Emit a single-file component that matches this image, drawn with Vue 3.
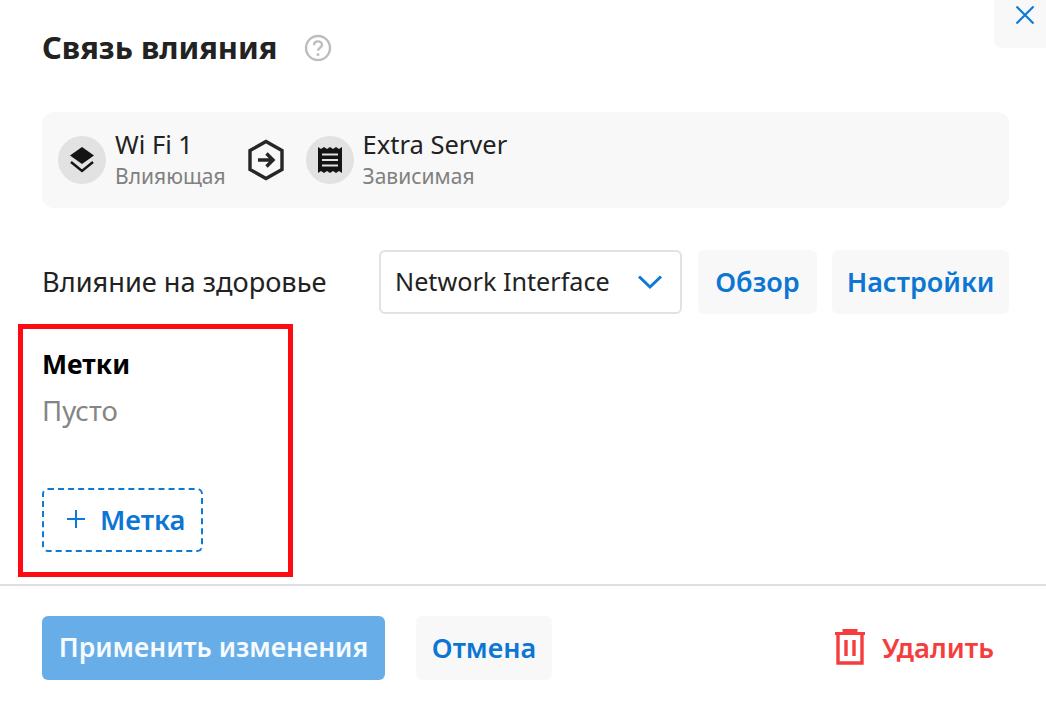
<template>
  <div class="dialog">
    <button class="close-btn" aria-label="Закрыть">
      <svg width="20" height="20" viewBox="0 0 20 20"><path d="M1.500 1.500 L18.500 18.500 M18.500 1.500 L1.500 18.500" stroke="#0b7ad9" stroke-width="2.200" fill="none" /></svg>
    </button>

    <header class="title-row">
      <h1 class="title">Связь влияния</h1>
      <svg class="help" width="28" height="28" viewBox="0 0 28 28">
        <circle cx="14" cy="14" r="12" fill="none" stroke="#bdbdbd" stroke-width="2.400" />
        <path d="M10 11.200c0-2.400 1.800-3.800 4-3.800s4 1.400 4 3.400c0 3-4 3-4 6" fill="none" stroke="#bdbdbd" stroke-width="2.400" />
        <circle cx="14" cy="20.400" r="1.500" fill="#bdbdbd" />
      </svg>
    </header>

    <div class="link-card">
      <div class="node">
        <span class="node-icon">
          <svg width="26" height="28" viewBox="0 0 26 28">
            <path d="M13 1 L25 9.500 L13 18 L1 9.500 Z" fill="#141414" />
            <path d="M2 16 L13 25 L24 16" fill="none" stroke="#141414" stroke-width="2.400" />
          </svg>
        </span>
        <div class="node-text">
          <div class="node-name">Wi Fi 1</div>
          <div class="node-role">Влияющая</div>
        </div>
      </div>

      <svg class="arrow" width="38" height="42" viewBox="0 0 38 42">
        <path d="M19 2.500 L35 11.500 V30.500 L19 39.500 L3 30.500 V11.500 Z" fill="none" stroke="#262626" stroke-width="3.400" stroke-linejoin="miter" />
        <path d="M11 21 H25 M19.500 14.500 L26 21 L19.500 27.500" fill="none" stroke="#262626" stroke-width="3.400" />
      </svg>

      <div class="node">
        <span class="node-icon">
          <svg width="26" height="28" viewBox="0 0 26 28">
            <path d="M1 1 L4 3 L7 1 L10 3 L13 1 L16 3 L19 1 L22 3 L25 1 V27 L22 25 L19 27 L16 25 L13 27 L10 25 L7 27 L4 25 L1 27 Z" fill="#141414" />
            <path d="M5 8.500 H21 M5 14 H21 M5 19.500 H21" stroke="#e2e2e2" stroke-width="2.200" />
          </svg>
        </span>
        <div class="node-text">
          <div class="node-name">Extra Server</div>
          <div class="node-role">Зависимая</div>
        </div>
      </div>
    </div>

    <div class="health-row">
      <span class="health-label">Влияние на здоровье</span>
      <div class="select">
        <span class="select-value">Network Interface</span>
        <svg width="26" height="16" viewBox="0 0 26 16"><path d="M2 2.500 L13 13 L24 2.500" fill="none" stroke="#0b7ad9" stroke-width="3" /></svg>
      </div>
      <button class="btn btn-light btn-overview">Обзор</button>
      <button class="btn btn-light btn-settings">Настройки</button>
    </div>

    <section class="tags">
      <h2 class="tags-title">Метки</h2>
      <p class="tags-empty">Пусто</p>
      <button class="add-tag">
        <svg width="20" height="20" viewBox="0 0 20 20"><path d="M10 1 V19 M1 10 H19" stroke="#0b7ad9" stroke-width="2" /></svg>
        <span>Метка</span>
      </button>
    </section>

    <footer class="footer">
      <button class="btn btn-apply">Применить изменения</button>
      <button class="btn btn-light btn-cancel">Отмена</button>
      <button class="btn-delete">
        <svg width="32" height="36" viewBox="0 0 32 36">
          <path d="M1 4.500 H31" stroke="#f53d3d" stroke-width="3" />
          <path d="M10 4 V1.500 H22 V4" fill="none" stroke="#f53d3d" stroke-width="3" />
          <path d="M4 5 V34 H28 V5" fill="none" stroke="#f53d3d" stroke-width="3.400" />
          <path d="M12 11 V27 M20 11 V27" stroke="#f53d3d" stroke-width="3.400" />
        </svg>
        <span>Удалить</span>
      </button>
    </footer>
  </div>
</template>

<script setup>
</script>

<style>
html,
body {
  margin: 0;
  background: #fff;
}
</style>

<style scoped>
.dialog {
  position: relative;
  width: 1046px;
  height: 704px;
  overflow: hidden;
  box-sizing: border-box;
  padding: 0 37px 0 42px;
  font-family: "Noto Sans", "Open Sans", sans-serif;
  color: #222;
  background: #fff;
}

button {
  font-family: inherit;
  border: 0;
  padding: 0;
  cursor: pointer;
}

.close-btn {
  position: absolute;
  top: -10px;
  right: 0;
  width: 52px;
  height: 58px;
  display: flex;
  align-items: flex-start;
  justify-content: center;
  padding: 15px 0 0 10px;
  background: #f8f8f8;
  border-radius: 0 0 0 8px;
  box-sizing: border-box;
}

.title-row {
  height: 112px;
  display: flex;
  align-items: flex-start;
  gap: 27px;
  padding-top: 26px;
  box-sizing: border-box;
}

.title {
  margin: 0;
  font-size: 30.800px;
  line-height: 42px;
  font-weight: 700;
  color: #222;
}

.help {
  margin-top: 8px;
}

.link-card {
  height: 96px;
  display: flex;
  align-items: center;
  padding: 0 16px;
  background: #f8f8f8;
  border-radius: 12px;
}

.node {
  display: flex;
  align-items: center;
  gap: 9px;
}

.node-icon {
  width: 48px;
  height: 48px;
  border-radius: 50%;
  background: #e2e2e2;
  display: flex;
  align-items: center;
  justify-content: center;
}

.node-name {
  font-size: 25.500px;
  line-height: 30px;
  margin-bottom: 2px;
  color: #222;
  white-space: nowrap;
}

.node-role {
  font-size: 21px;
  line-height: 30px;
  color: #808080;
  white-space: nowrap;
}

.arrow {
  margin: 0 21px;
}

.health-row {
  display: flex;
  align-items: center;
  height: 64px;
  margin-top: 42px;
}

.health-label {
  width: 337px;
  margin-bottom: 2px;
  font-size: 27.200px;
  color: #222;
  white-space: nowrap;
}

.select {
  width: 303px;
  height: 64px;
  box-sizing: border-box;
  display: flex;
  align-items: center;
  justify-content: space-between;
  padding: 0 17px 0 14px;
  border: 2px solid #e2e2e2;
  border-radius: 6px;
  font-size: 25.200px;
  color: #222;
  white-space: nowrap;
}

.select-value {
  margin-bottom: 2px;
}

.btn {
  height: 64px;
  padding-bottom: 2px;
  font-size: 27px;
  font-weight: 600;
  border-radius: 6px;
  white-space: nowrap;
}

.btn-light {
  background: #f8f8f8;
  color: #0b76d4;
}

.btn-overview {
  width: 119px;
  margin-left: 16px;
}

.btn-settings {
  width: 177px;
  margin-left: 15px;
}

.tags {
  width: 275px;
  height: 253px;
  box-sizing: border-box;
  margin: 10px 0 0 -24px;
  padding: 17px 19px 0;
  border: 5px solid #fe0a12;
}

.tags-title {
  margin: 0;
  font-size: 26.600px;
  line-height: 36px;
  font-weight: 700;
  color: #000;
}

.tags-empty {
  margin: 11px 0 0;
  font-size: 27.500px;
  line-height: 36px;
  color: #858585;
}

.add-tag {
  margin-top: 59px;
  width: 161px;
  height: 64px;
  display: flex;
  align-items: center;
  justify-content: flex-start;
  gap: 14px;
  padding: 0 0 2px 22px;
  background: #fff;
  border: 2px dashed #0b7ad9;
  border-radius: 6px;
  box-sizing: border-box;
  font-size: 27.300px;
  font-weight: 600;
  color: #0b76d4;
}

.footer {
  display: flex;
  align-items: flex-start;
  margin: 7px -37px 0 -42px;
  padding: 30px 37px 0 42px;
  box-sizing: border-box;
  border-top: 2px solid #dedee3;
}

.btn-apply {
  width: 343px;
  font-size: 26.500px;
  background: #67aee8;
  color: #f6fbff;
}

.btn-cancel {
  width: 136px;
  margin-left: 31px;
}

.btn-delete {
  margin-left: auto;
  margin-right: 15px;
  height: 64px;
  padding-bottom: 2px;
  display: flex;
  align-items: center;
  gap: 16px;
  background: none;
  font-size: 27.500px;
  font-weight: 600;
  color: #f53d3d;
}
</style>
